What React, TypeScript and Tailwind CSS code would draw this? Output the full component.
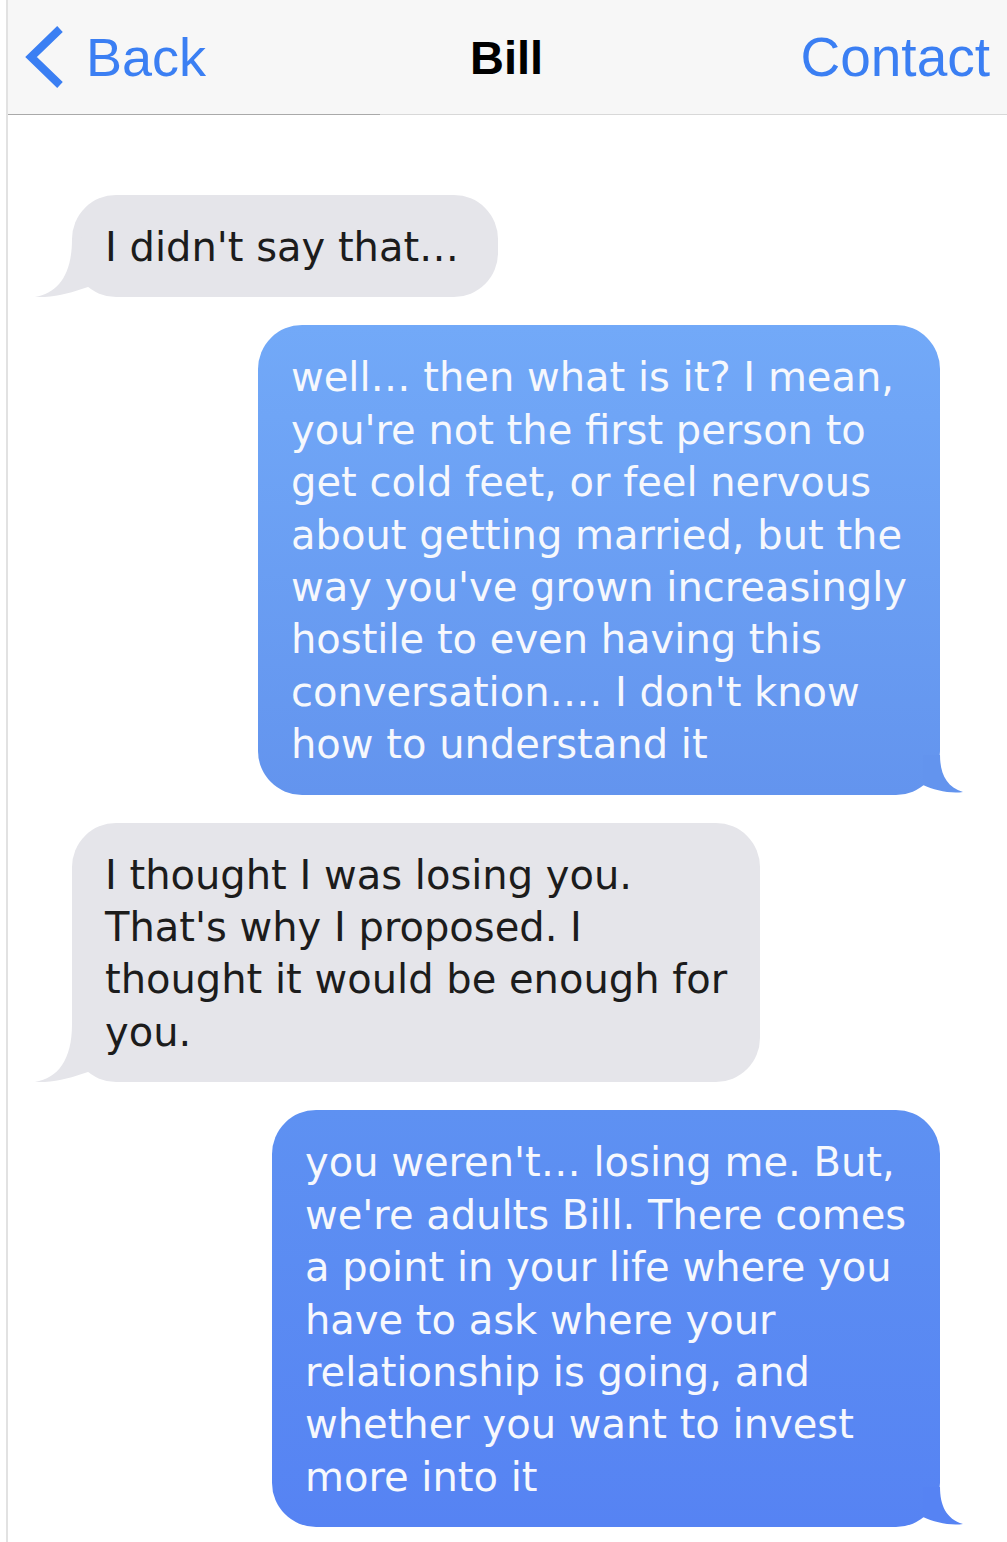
import type { ReactNode } from "react";

type Side = "in" | "out";

type Message = {
  side: Side;
  width: string;
  tone?: string;
  tail?: string;
  lines: string[];
};

const messages: Message[] = [
  { side: "in", width: "w-[426px]", lines: ["I didn't say that\u2026"] },
  {
    side: "out",
    width: "w-[682px]",
    tone: "bg-linear-to-b from-[#72a9f8] to-[#6394ee]",
    tail: "#6394ee",
    lines: [
      "well\u2026 then what is it? I mean,",
      "you're not the first person to",
      "get cold feet, or feel nervous",
      "about getting married, but the",
      "way you've grown increasingly",
      "hostile to even having this",
      "conversation\u2026. I don't know",
      "how to understand it",
    ],
  },
  {
    side: "in",
    width: "w-[688px]",
    lines: [
      "I thought I was losing you.",
      "That's why I proposed. I",
      "thought it would be enough for",
      "you.",
    ],
  },
  {
    side: "out",
    width: "w-[668px]",
    tone: "bg-linear-to-b from-[#5e91f2] to-[#5683f3]",
    tail: "#5683f3",
    lines: [
      "you weren't\u2026 losing me. But,",
      "we're adults Bill. There comes",
      "a point in your life where you",
      "have to ask where your",
      "relationship is going, and",
      "whether you want to invest",
      "more into it",
    ],
  },
];

function TailIn() {
  return (
    <svg
      className="absolute bottom-0 left-[-40px] h-[64px] w-[90px]"
      viewBox="-40 -64 90 64"
      aria-hidden="true"
    >
      <path
        d="M0 -58 C0 -22 -14 -4 -37 0 C-18 1 -2 -4 16 -10 L16 -60 Z"
        fill="#e5e5ea"
      />
    </svg>
  );
}

function TailOut({ color }: { color: string }) {
  return (
    <svg
      className="absolute bottom-0 right-[-30px] h-[64px] w-[80px]"
      viewBox="-50 -64 80 64"
      aria-hidden="true"
    >
      <path
        d="M0 -40 C0 -22 6 -8 23 -3 C10 -1 -6 -5 -17 -10 L-17 -40 Z"
        fill={color}
      />
    </svg>
  );
}

function Bubble({
  side,
  width,
  tone,
  tail,
  children,
}: Omit<Message, "lines"> & { children: ReactNode }) {
  const base =
    "relative rounded-[44px] px-[33px] pt-[26px] pb-[24px] text-[40px] leading-[52.4px] whitespace-nowrap";
  if (side === "in") {
    return (
      <div className={`${base} ${width} self-start bg-[#e5e5ea] text-[#1c1c1c]`}>
        <TailIn />
        {children}
      </div>
    );
  }
  return (
    <div className={`${base} ${width} ${tone} self-end text-[#f6f8fd]`}>
      <TailOut color={tail ?? "#6394ee"} />
      {children}
    </div>
  );
}

export default function App() {
  return (
    <div className="min-h-[1542px] w-[1007px] bg-white pl-[6px]">
      <div className="flex min-h-[1542px] flex-col border-l-2 border-[#e2e2e2]">
        <header className="flex h-[114px] items-center justify-between bg-[#f7f7f7] pr-[17px] pl-[15px] font-['Liberation_Sans',Arial,sans-serif]">
          <div className="flex w-[300px] items-center text-[#3b7ff3]">
            <svg width="44" height="66" viewBox="0 0 44 66" aria-hidden="true">
              <path
                d="M37 5 L8 33 L37 61"
                fill="none"
                stroke="currentColor"
                strokeWidth="8"
              />
            </svg>
            <span className="ml-[19px] text-[54px] leading-none">Back</span>
          </div>
          <span className="text-[47px] leading-none font-bold text-black">Bill</span>
          <div className="flex w-[300px] justify-end">
            <span className="text-[55px] leading-none text-[#3b7ff3]">Contact</span>
          </div>
        </header>
        <div className="flex">
          <div className="h-px w-[372px] bg-[#a9a9a9]" />
          <div className="h-px flex-1 bg-[#d8d8d8]" />
        </div>

        <main className="flex flex-col gap-[28px] pt-[80px] pr-[67px] pl-[64px] font-['DejaVu_Sans',Verdana,sans-serif]">
          {messages.map((m, i) => (
            <Bubble key={i} side={m.side} width={m.width} tone={m.tone} tail={m.tail}>
              {m.lines.map((line) => (
                <div key={line}>{line}</div>
              ))}
            </Bubble>
          ))}
        </main>
      </div>
    </div>
  );
}
